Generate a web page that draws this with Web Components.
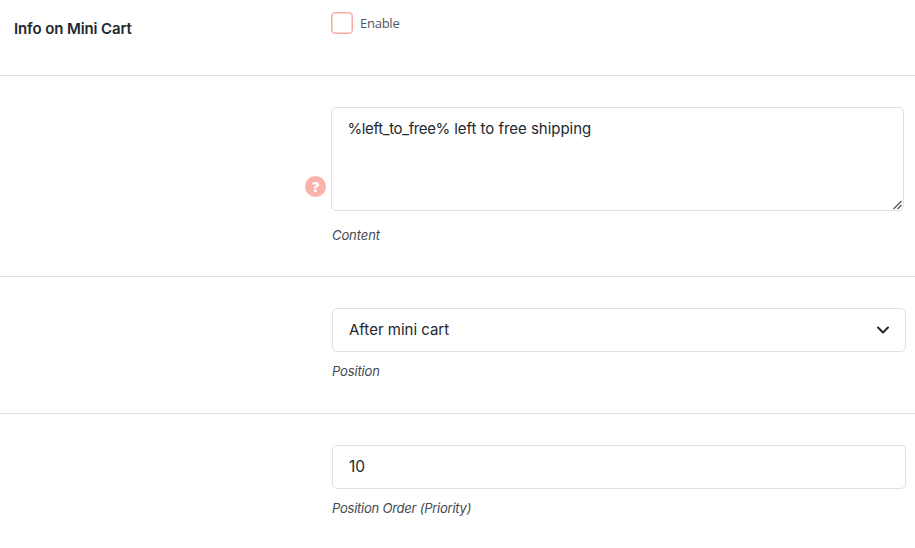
<!DOCTYPE html>
<html lang="en">
<head>
<meta charset="utf-8">
<title>Info on Mini Cart</title>
<style>
  body {
    margin: 0;
    height: 548px;
    overflow: hidden;
    background: #fff;
    color: #23282d;
    font-family: Inter, "Liberation Sans", sans-serif;
  }

  .token {
    letter-spacing: -0.37px;
  }
</style>
</head>
<body>
<settings-table>
  <settings-row style="--height: 75px; --top: 12px">
    <span slot="label">Info on Mini Cart</span>
    <check-option>Enable</check-option>
  </settings-row>
  <settings-row style="--height: 200px; --top: 31px">
    <help-tip slot="help">?</help-tip>
    <text-box kind="area"><span class="token">%left_to_free%</span> left to free shipping</text-box>
    <field-note style="--gap: 14px">Content</field-note>
  </settings-row>
  <settings-row style="--height: 136px; --top: 31px">
    <text-box kind="select">After mini cart</text-box>
    <field-note style="--spacing: -0.15px">Position</field-note>
  </settings-row>
  <settings-row style="--height: 134px; --top: 31px">
    <text-box kind="input">10</text-box>
    <field-note style="--spacing: -0.24px">Position Order (Priority)</field-note>
  </settings-row>
</settings-table>

<script>
// Stack of setting rows
class SettingsTable extends HTMLElement {
  constructor() {
    super();
    this.attachShadow({ mode: 'open' });
    this.shadowRoot.innerHTML = `
      <style>
        :host {
          display: flex;
          flex-direction: column;
        }
      </style>
      <slot></slot>
    `;
  }
}

// Label column, help column and field column
class SettingsRow extends HTMLElement {
  constructor() {
    super();
    this.attachShadow({ mode: 'open' });
    this.shadowRoot.innerHTML = `
      <style>
        :host {
          display: grid;
          grid-template-columns: 291.4px 25.6px 574px;
          box-sizing: content-box;
          height: var(--height);
          padding-left: 14px;
          border-bottom: 1px solid #dfe0e1;
        }

        :host(:last-child) {
          border-bottom: none;
        }

        .label {
          padding-top: 20px;
          font-size: 15px;
          font-weight: 600;
          letter-spacing: -0.11px;
          line-height: 18px;
        }

        .help {
          padding-top: 100px;
        }

        .field {
          padding-top: var(--top);
        }
      </style>
      <div class="label"><slot name="label"></slot></div>
      <div class="help"><slot name="help"></slot></div>
      <div class="field"><slot></slot></div>
    `;
  }
}

class CheckOption extends HTMLElement {
  constructor() {
    super();
    this.attachShadow({ mode: 'open' });
    this.shadowRoot.innerHTML = `
      <style>
        :host {
          display: flex;
          align-items: center;
          gap: 7px;
          height: 22px;
          color: #50575e;
          font: 13px/22px "Open Sans", "Noto Sans", sans-serif;
          letter-spacing: -0.25px;
        }

        .box {
          box-sizing: border-box;
          width: 22px;
          height: 22px;
          border: 1px solid #fba8a0;
          border-radius: 4px;
          box-shadow: inset 0 0 0 0.5px #fba8a0;
        }
      </style>
      <span class="box"></span>
      <span><slot></slot></span>
    `;
  }
}

class HelpTip extends HTMLElement {
  constructor() {
    super();
    this.attachShadow({ mode: 'open' });
    this.shadowRoot.innerHTML = `
      <style>
        :host {
          display: flex;
          align-items: center;
          justify-content: center;
          width: 21px;
          height: 21px;
          border-radius: 50%;
          background: #fab3ac;
          color: #fff;
          font: 800 14px/21px "Open Sans", sans-serif;
        }
      </style>
      <slot></slot>
    `;
  }
}

// Bordered field; kind is area, select or input
class TextBox extends HTMLElement {
  constructor() {
    super();
    this.attachShadow({ mode: 'open' });
  }

  connectedCallback() {
    this.shadowRoot.innerHTML = `
      <style>
        :host {
          display: flex;
          align-items: center;
          justify-content: space-between;
          box-sizing: border-box;
          width: 574px;
          height: 44px;
          margin-left: 1px;
          padding: 0 15px 0 16px;
          border: 1px solid #dfe0e1;
          border-radius: 5px;
          background: #fff;
          font-size: 15px;
          line-height: 24px;
        }

        :host([kind="area"]) {
          align-items: flex-start;
          height: 104px;
          width: 573px;
          margin-left: 0;
          padding: 9px 1px 0 15.5px;
          letter-spacing: -0.03px;
        }

        :host([kind="input"]) {
          font-size: 15.5px;
        }

        :host([kind="area"]) svg {
          align-self: flex-end;
        }
      </style>
      <span><slot></slot></span>
      ${this.renderIcon()}
    `;
  }

  renderIcon() {
    const kind = this.getAttribute('kind');
    if (kind === 'select') {
      return `<svg width="14" height="10" viewBox="0 0 14 10" fill="none" stroke="#23282d" stroke-width="2" stroke-linecap="round" stroke-linejoin="round"><path d="M2 2.5l5 5 5-5"/></svg>`;
    }
    if (kind === 'area') {
      return `<svg width="10" height="10" viewBox="0 0 10 10" fill="none" stroke="#555" stroke-width="1.3"><path d="M1.5 9L9.5 1M5.5 9L9.5 5"/></svg>`;
    }
    return '';
  }
}

class FieldNote extends HTMLElement {
  constructor() {
    super();
    this.attachShadow({ mode: 'open' });
    this.shadowRoot.innerHTML = `
      <style>
        :host {
          display: block;
          margin: var(--gap, 9px) 0 0 1px;
          color: #444a50;
          font-size: 13px;
          font-style: italic;
          letter-spacing: var(--spacing, -0.08px);
          line-height: 20px;
        }
      </style>
      <slot></slot>
    `;
  }
}

customElements.define('settings-table', SettingsTable);
customElements.define('settings-row', SettingsRow);
customElements.define('check-option', CheckOption);
customElements.define('help-tip', HelpTip);
customElements.define('text-box', TextBox);
customElements.define('field-note', FieldNote);
</script>
</body>
</html>
